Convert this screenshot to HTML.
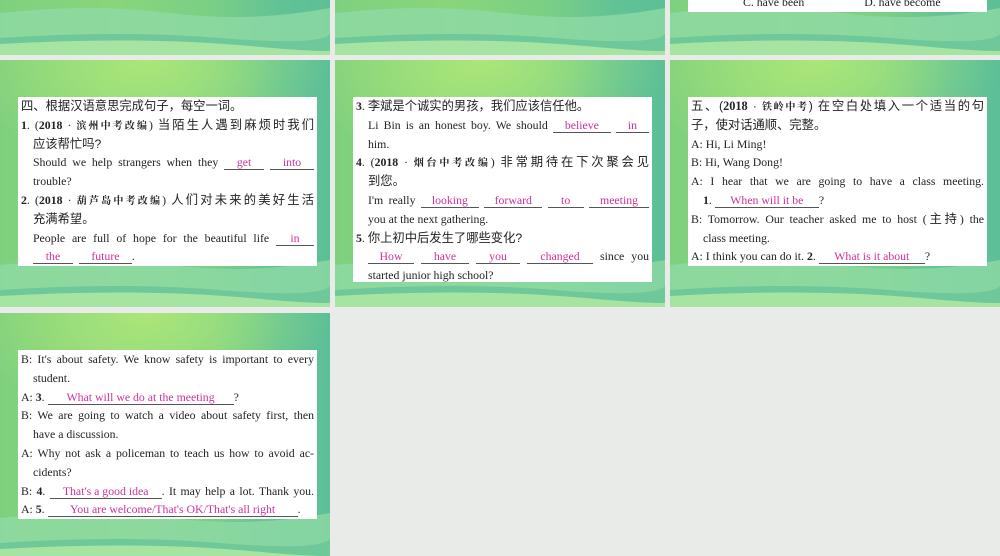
<!DOCTYPE html>
<html><head><meta charset="utf-8"><style>
*{margin:0;padding:0;box-sizing:border-box}
body{width:1000px;height:556px;background:#e8ebe8;position:relative;overflow:hidden;font-family:"Liberation Serif","Noto Serif CJK SC",serif;font-size:11.8px;color:#222}
.s{position:absolute;width:330px;overflow:hidden}
.bg{position:absolute;left:0;top:0;width:330px;height:247px;
background:radial-gradient(ellipse 55% 45% at 45% 0%,rgba(175,232,120,.9),rgba(175,232,120,0) 100%),linear-gradient(90deg,#7fd07e 0%,#8ad57c 35%,#79cf86 65%,#62c296 85%,#5dbf97 100%)}
.bg svg{position:absolute;left:0;top:0}
.box{position:absolute;left:18px;width:299px;background:#fff;padding:0 3px 0 3px}
.l{height:18.8px;line-height:18.8px;white-space:nowrap}
.j{text-align:justify;text-align-last:justify}
.i{padding-left:12px}
.cj{font-family:"Liberation Sans","Noto Sans CJK SC",sans-serif;font-size:12.3px}
.b{font-weight:bold}
.k{font-family:"Noto Serif CJK SC",serif;font-weight:bold;font-size:10px}
.u{display:inline-block;border-bottom:1px solid #555;color:#d0309a;text-align:center;line-height:14px;text-align-last:center}
</style></head><body>

<div class="s" style="left:0;top:0;height:55px"><div class="bg" style="top:-192px"><svg width="330" height="247"><path d="M0 205 Q90 195 170 205 T330 200 V247 H0Z" fill="#8fd9a5" opacity=".8"/><path d="M0 230 Q120 222 220 230 T330 226 V247 H0Z" fill="#6fc89a"/><path d="M0 236 Q140 228 250 238 T330 238 V247 H0Z" fill="#a6e4a2"/></svg></div></div>
<div class="s" style="left:335px;top:0;height:55px"><div class="bg" style="top:-192px"><svg width="330" height="247"><path d="M0 205 Q90 195 170 205 T330 200 V247 H0Z" fill="#8fd9a5" opacity=".8"/><path d="M0 230 Q120 222 220 230 T330 226 V247 H0Z" fill="#6fc89a"/><path d="M0 236 Q140 228 250 238 T330 238 V247 H0Z" fill="#a6e4a2"/></svg></div></div>
<div class="s" style="left:670px;top:0;height:55px"><div class="bg" style="top:-192px"><svg width="330" height="247"><path d="M0 205 Q90 195 170 205 T330 200 V247 H0Z" fill="#8fd9a5" opacity=".8"/><path d="M0 230 Q120 222 220 230 T330 226 V247 H0Z" fill="#6fc89a"/><path d="M0 236 Q140 228 250 238 T330 238 V247 H0Z" fill="#a6e4a2"/></svg></div>
<div class="box" style="top:-7px;height:19px"><div class="l" style="padding-left:52px">C. have been<span style="display:inline-block;width:60px"></span>D. have become</div></div></div>

<div class="s" style="left:0;top:60px;height:247px"><div class="bg"><svg width="330" height="247"><path d="M0 205 Q90 195 170 205 T330 200 V247 H0Z" fill="#8fd9a5" opacity=".8"/><path d="M0 230 Q120 222 220 230 T330 226 V247 H0Z" fill="#6fc89a"/><path d="M0 236 Q140 228 250 238 T330 238 V247 H0Z" fill="#a6e4a2"/></svg></div>
<div class="box" style="top:37px;height:169px">
<div class="l cj">四、根据汉语意思完成句子，每空一词。</div>
<div class="l j"><span class="b">1</span>. (<span class="b">2018</span> · <span class="k">滨州中考改编</span>) <span class="cj">当陌生人遇到麻烦时我们</span></div>
<div class="l i cj">应该帮忙吗?</div>
<div class="l i j">Should we help strangers when they <span class="u" style="width:40px">get</span> <span class="u" style="width:44px">into</span></div>
<div class="l i">trouble?</div>
<div class="l j"><span class="b">2</span>. (<span class="b">2018</span> · <span class="k">葫芦岛中考改编</span>) <span class="cj">人们对未来的美好生活</span></div>
<div class="l i cj">充满希望。</div>
<div class="l i j">People are full of hope for the beautiful life <span class="u" style="width:38px">in</span></div>
<div class="l i"><span class="u" style="width:40px">the</span> &nbsp;<span class="u" style="width:53px">future</span>.</div>
</div></div>

<div class="s" style="left:335px;top:60px;height:247px"><div class="bg"><svg width="330" height="247"><path d="M0 205 Q90 195 170 205 T330 200 V247 H0Z" fill="#8fd9a5" opacity=".8"/><path d="M0 230 Q120 222 220 230 T330 226 V247 H0Z" fill="#6fc89a"/><path d="M0 236 Q140 228 250 238 T330 238 V247 H0Z" fill="#a6e4a2"/></svg></div>
<div class="box" style="top:37px;height:185px">
<div class="l"><span class="b">3</span>. <span class="cj">李斌是个诚实的男孩，我们应该信任他。</span></div>
<div class="l i j">Li Bin is an honest boy. We should <span class="u" style="width:58px">believe</span> <span class="u" style="width:33px">in</span></div>
<div class="l i">him.</div>
<div class="l j"><span class="b">4</span>. (<span class="b">2018</span> · <span class="k">烟台中考改编</span>) <span class="cj">非常期待在下次聚会见</span></div>
<div class="l i cj">到您。</div>
<div class="l i j">I'm really <span class="u" style="width:58px">looking</span> <span class="u" style="width:58px">forward</span> <span class="u" style="width:36px">to</span> <span class="u" style="width:60px">meeting</span></div>
<div class="l i">you at the next gathering.</div>
<div class="l"><span class="b">5</span>. <span class="cj">你上初中后发生了哪些变化?</span></div>
<div class="l i j"><span class="u" style="width:46px">How</span> <span class="u" style="width:48px">have</span> <span class="u" style="width:44px">you</span> <span class="u" style="width:66px">changed</span> since you</div>
<div class="l i">started junior high school?</div>
</div></div>

<div class="s" style="left:670px;top:60px;height:247px"><div class="bg"><svg width="330" height="247"><path d="M0 205 Q90 195 170 205 T330 200 V247 H0Z" fill="#8fd9a5" opacity=".8"/><path d="M0 230 Q120 222 220 230 T330 226 V247 H0Z" fill="#6fc89a"/><path d="M0 236 Q140 228 250 238 T330 238 V247 H0Z" fill="#a6e4a2"/></svg></div>
<div class="box" style="top:37px;height:169px">
<div class="l j cj">五、(<span class="b" style="font-family:'Liberation Serif'">2018</span> · <span class="k">铁岭中考</span>) 在空白处填入一个适当的句</div>
<div class="l cj">子，使对话通顺、完整。</div>
<div class="l">A: Hi, Li Ming!</div>
<div class="l">B: Hi, Wang Dong!</div>
<div class="l j">A: I hear that we are going to have a class meeting.</div>
<div class="l i"><span class="b">1</span>. <span class="u" style="width:104px">When will it be</span>?</div>
<div class="l j">B: Tomorrow. Our teacher asked me to host (<span class="cj">主持</span>) the</div>
<div class="l i">class meeting.</div>
<div class="l">A: I think you can do it. <span class="b">2</span>. <span class="u" style="width:106px">What is it about</span>?</div>
</div></div>

<div class="s" style="left:0;top:313px;height:243px"><div class="bg"><svg width="330" height="247"><path d="M0 205 Q90 195 170 205 T330 200 V247 H0Z" fill="#8fd9a5" opacity=".8"/><path d="M0 230 Q120 222 220 230 T330 226 V247 H0Z" fill="#6fc89a"/><path d="M0 236 Q140 228 250 238 T330 238 V247 H0Z" fill="#a6e4a2"/></svg></div>
<div class="box" style="top:37px;height:169px">
<div class="l j">B: It's about safety. We know safety is important to every</div>
<div class="l i">student.</div>
<div class="l">A: <span class="b">3</span>. <span class="u" style="width:186px">What will we do at the meeting</span>?</div>
<div class="l j">B: We are going to watch a video about safety first, then</div>
<div class="l i">have a discussion.</div>
<div class="l j">A: Why not ask a policeman to teach us how to avoid ac-</div>
<div class="l i">cidents?</div>
<div class="l j">B: <span class="b">4</span>. <span class="u" style="width:112px">That's a good idea</span>. It may help a lot. Thank you.</div>
<div class="l">A: <span class="b">5</span>. <span class="u" style="width:250px">You are welcome/That's OK/That's all right</span>.</div>
</div></div>

</body></html>
